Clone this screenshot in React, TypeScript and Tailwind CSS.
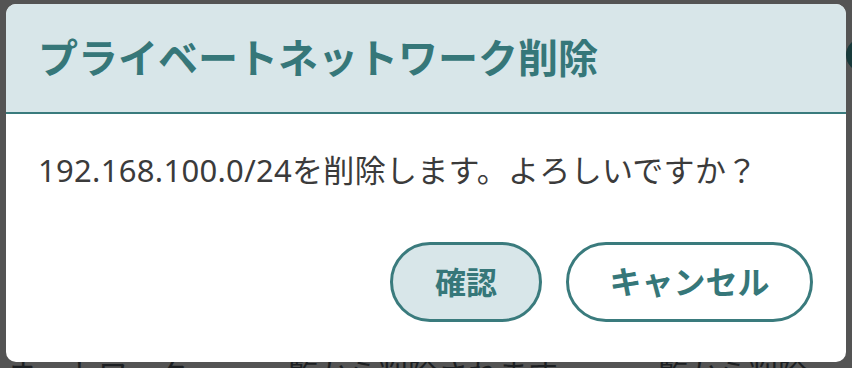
import React from 'react';

const App = () => {
  return (
    <div
      className="relative w-[852px] h-[368px] overflow-hidden bg-[#545454]"
      style={{ fontFamily: '"Noto Sans", "Noto Sans CJK JP", sans-serif' }}
    >
      {/* Dimmed page behind the dialog */}
      <div className="pt-[359px] pl-[8px] flex gap-[70px] text-[30px] text-[#1c1f22] whitespace-nowrap leading-none">
        <span>ネットワーク</span>
        <span>一覧から削除されます</span>
        <span>一覧から削除</span>
      </div>
      <div className="absolute left-[846px] top-[38px] w-[34px] h-[34px] rounded-full bg-[#183a3b]"></div>

      {/* Dialog */}
      <div className="absolute left-[6px] top-[4px] w-[840px] h-[358px] bg-white rounded-[10px] overflow-hidden flex flex-col">
        <div className="h-[110px] shrink-0 bg-[#d8e6e9] border-b-2 border-[#3a7b7d] flex items-center pl-[32px]">
          <h2 className="text-[40px] font-bold leading-none text-[#367779]">
            プライベートネットワーク削除
          </h2>
        </div>
        <div className="pt-[34px] pl-[32px] pr-[32px]">
          <p className="text-[31px] tracking-[0.3px] leading-[45px] text-[#3b3b3b] whitespace-nowrap">
            192.168.100.0/24を削除します。よろしいですか？
          </p>
        </div>
        <div className="mt-[49px] pr-[33px] flex justify-end gap-[24px]">
          <button className="w-[152px] h-[80px] rounded-full border-[3px] border-[#3a7b7d] bg-[#d8e6e9] text-[31px] font-bold text-[#367779] flex items-center justify-center">
            確認
          </button>
          <button className="w-[247px] h-[80px] rounded-full border-[3px] border-[#3a7b7d] bg-white text-[32px] font-bold text-[#367779] flex items-center justify-center">
            キャンセル
          </button>
        </div>
      </div>
    </div>
  );
};

export default App;
